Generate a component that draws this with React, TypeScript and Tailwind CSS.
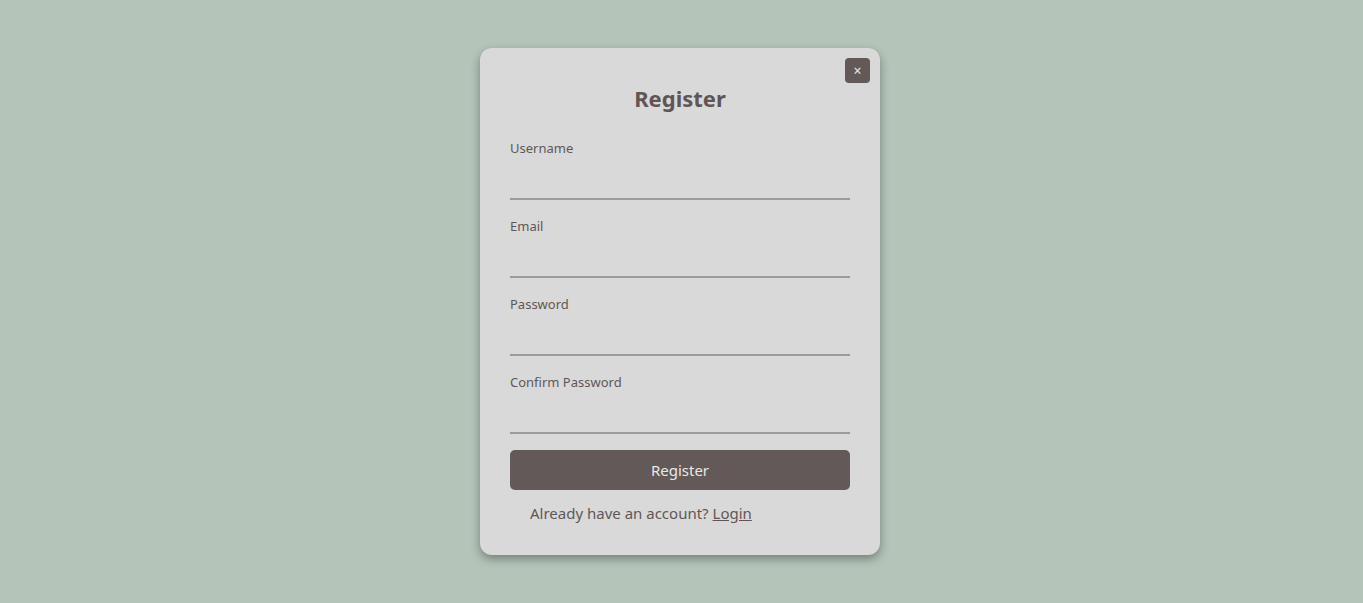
import React from 'react';

const fields = ['Username', 'Email', 'Password', 'Confirm Password'];

export default function App() {
  return (
    <div
      className="min-h-screen w-full flex items-center justify-center bg-[#b4c4b9]"
      style={{ fontFamily: '"Noto Sans", "Open Sans", sans-serif' }}
    >
      <div className="relative mr-[3px] w-[400px] h-[507px] bg-[#d9d9d9] rounded-xl px-[30px] pt-8 shadow-[0_4px_10px_rgba(0,0,0,0.35)]">
        <button className="absolute top-[10px] right-[10px] w-[25px] h-[25px] rounded-[4px] bg-[#625958] text-[#eaeaea] text-[14px] leading-none flex items-center justify-center">
          ×
        </button>
        <h2 className="text-center text-[22px] leading-9 font-bold text-[#5f5555]">Register</h2>
        <form className="mt-[22px] flex flex-col">
          {fields.map((f, i) => (
            <div key={f} className={i > 0 ? 'mt-4' : ''}>
              <label className="block text-[13px] leading-5 text-[#5f5757]">{f}</label>
              <input
                type={f.includes('Password') ? 'password' : 'text'}
                className="block w-full h-[42px] bg-transparent border-b-2 border-[#9b9b9b] outline-none"
              />
            </div>
          ))}
          <button
            type="button"
            className="mt-4 h-10 w-full rounded-[5px] bg-[#625958] text-[#e8e8e8] text-[15px]"
          >
            Register
          </button>
        </form>
        <p className="mt-[11px] pl-5 text-[15px] leading-6 text-[#5f5757]">
          Already have an account? <a className="underline">Login</a>
        </p>
      </div>
    </div>
  );
}
